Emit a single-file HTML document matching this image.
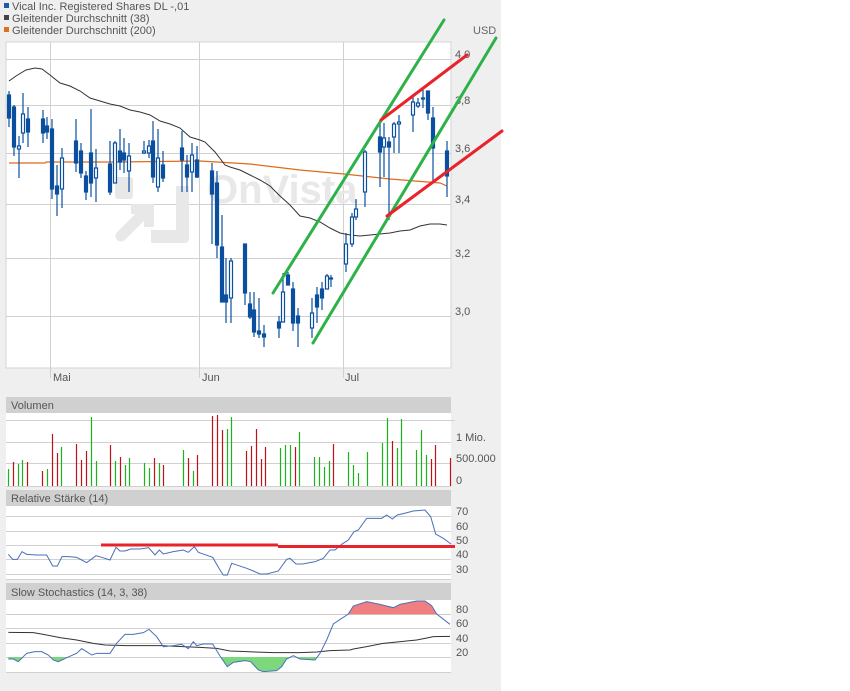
<!DOCTYPE html>
<html><head><meta charset="utf-8"><style>
html,body{margin:0;padding:0;background:#fff;}
body{width:850px;height:691px;position:relative;overflow:hidden;font-family:"Liberation Sans",sans-serif;}
</style></head><body>
<svg width="850" height="691" viewBox="0 0 850 691" xmlns="http://www.w3.org/2000/svg" style="position:absolute;left:0;top:0;font-family:'Liberation Sans',sans-serif">
<rect x="0" y="0" width="501" height="691" fill="#efefef"/>
<rect x="4" y="3" width="5" height="5" fill="#1f5aa6"/>
<rect x="4" y="15" width="5" height="5" fill="#444"/>
<rect x="4" y="27" width="5" height="5" fill="#e07020"/>
<g font-size="11" fill="#555">
<text x="12" y="10">Vical Inc. Registered Shares DL -,01</text>
<text x="12" y="22">Gleitender Durchschnitt (38)</text>
<text x="12" y="34">Gleitender Durchschnitt (200)</text>
<text x="473" y="34" fill="#666">USD</text>
</g>
<rect x="6" y="42" width="445" height="326" fill="#fff" stroke="#d4d4d4"/>
<g stroke="#d0d0d0" stroke-width="1">
<line x1="6" x2="451" y1="59.5" y2="59.5"/><line x1="6" x2="451" y1="105.5" y2="105.5"/>
<line x1="6" x2="451" y1="153.5" y2="153.5"/><line x1="6" x2="451" y1="204.5" y2="204.5"/>
<line x1="6" x2="451" y1="258.5" y2="258.5"/><line x1="6" x2="451" y1="316.5" y2="316.5"/>
<line x1="50.5" x2="50.5" y1="42" y2="378"/><line x1="199.5" x2="199.5" y1="42" y2="378"/><line x1="343.5" x2="343.5" y1="42" y2="378"/>
</g>
<g fill="#e8e8e8">
<rect x="115" y="177" width="18" height="22" rx="3"/>
<path d="M176 186 h13 v52 q0 5 -5 5 h-33 v-13 h25 z"/>
<line x1="121" y1="236" x2="145" y2="212" stroke="#e8e8e8" stroke-width="11" stroke-linecap="round"/>
<path d="M131 204 h23 v23 l-10 0 v-13 h-13z"/>
<text x="207" y="203" font-size="40" font-weight="bold">OnVista</text>
</g>
<g font-size="11" fill="#555">
<text x="455" y="58">4,0</text><text x="455" y="104">3,8</text><text x="455" y="152">3,6</text>
<text x="455" y="203">3,4</text><text x="455" y="257">3,2</text><text x="455" y="315">3,0</text>
<text x="53" y="381">Mai</text><text x="202" y="381">Jun</text><text x="345" y="381">Jul</text>
</g>
<polyline fill="none" stroke="#e06a1a" stroke-width="1.2" points="9,163 45,163 46,162 120,162 200,161 250,164 300,170 344,174 390,179 440,183 447,186"/>
<polyline fill="none" stroke="#333" stroke-width="1" points="9,81 16,76 26,70 35,68 42,69 50,75 60,83 70,86 80,91 90,98 100,101 110,104 120,106 130,110 140,112 150,115 160,121 170,124 180,128 190,137 200,140 205,142 215,152 225,165 230,167 240,170 250,175 260,180 270,186 280,196 290,205 300,216 310,218 320,222 330,228 340,233 350,235 360,236 370,235 380,234 390,233 400,231 410,230 420,226 430,224 440,224 447,225"/>
<g stroke="#0b4f9e" stroke-width="1.2" fill="#0b4f9e">
<line x1="9" x2="9" y1="91" y2="127"/><rect x="7.5" y="95" width="3" height="23"/>
<line x1="14" x2="14" y1="105" y2="156"/><rect x="12.5" y="107" width="3" height="40"/>
<line x1="19" x2="19" y1="136" y2="178"/><rect x="17.5" y="146" width="3" height="3" fill="#fff"/>
<line x1="23" x2="23" y1="93" y2="143"/><rect x="21.5" y="114" width="3" height="19" fill="#fff"/>
<line x1="28" x2="28" y1="107" y2="147"/><rect x="26.5" y="119" width="3" height="13"/>
<line x1="43" x2="43" y1="110" y2="143"/><rect x="41.5" y="119" width="3" height="14"/>
<line x1="47" x2="47" y1="117" y2="139"/><rect x="45.5" y="126" width="3" height="6"/>
<line x1="52" x2="52" y1="119" y2="199"/><rect x="50.5" y="129" width="3" height="60"/>
<line x1="57" x2="57" y1="165" y2="216"/><rect x="55.5" y="186" width="3" height="8"/>
<line x1="62" x2="62" y1="148" y2="208"/><rect x="60.5" y="158" width="3" height="31" fill="#fff"/>
<line x1="76" x2="76" y1="119" y2="172"/><rect x="74.5" y="141" width="3" height="22"/>
<line x1="81" x2="81" y1="143" y2="178"/><rect x="79.5" y="151" width="3" height="22"/>
<line x1="86" x2="86" y1="171" y2="200"/><rect x="84.5" y="176" width="3" height="16"/>
<line x1="91" x2="91" y1="109" y2="197"/><rect x="89.5" y="153" width="3" height="30"/>
<line x1="96" x2="96" y1="149" y2="202"/><rect x="94.5" y="168" width="3" height="10" fill="#fff"/>
<line x1="110" x2="110" y1="141" y2="195"/><rect x="108.5" y="164" width="3" height="28"/>
<line x1="115" x2="115" y1="141" y2="183"/><rect x="113.5" y="143" width="3" height="40" fill="#fff"/>
<line x1="120" x2="120" y1="129" y2="170"/><rect x="118.5" y="151" width="3" height="11"/>
<line x1="124" x2="124" y1="138" y2="173"/><rect x="122.5" y="153" width="3" height="7"/>
<line x1="129" x2="129" y1="143" y2="192"/><rect x="127.5" y="156" width="3" height="15" fill="#fff"/>
<line x1="144" x2="144" y1="141" y2="154"/><rect x="142.5" y="151" width="3" height="2" fill="#fff"/>
<line x1="149" x2="149" y1="140" y2="158"/><rect x="147.5" y="146" width="3" height="7" fill="#fff"/>
<line x1="153" x2="153" y1="121" y2="183"/><rect x="151.5" y="141" width="3" height="36"/>
<line x1="158" x2="158" y1="129" y2="192"/><rect x="156.5" y="158" width="3" height="29" fill="#fff"/>
<line x1="163" x2="163" y1="151" y2="182"/><rect x="161.5" y="165" width="3" height="13"/>
<line x1="182" x2="182" y1="131" y2="192"/><rect x="180.5" y="148" width="3" height="12"/>
<line x1="187" x2="187" y1="155" y2="192"/><rect x="185.5" y="165" width="3" height="12"/>
<line x1="192" x2="192" y1="143" y2="192"/><rect x="190.5" y="155" width="3" height="17" fill="#fff"/>
<line x1="197" x2="197" y1="146" y2="178"/><rect x="195.5" y="160" width="3" height="17"/>
<line x1="212" x2="212" y1="163" y2="244"/><rect x="210.5" y="171" width="3" height="23"/>
<line x1="217" x2="217" y1="171" y2="258"/><rect x="215.5" y="183" width="3" height="62"/>
<line x1="222" x2="222" y1="215" y2="302"/><rect x="220.5" y="247" width="3" height="55"/>
<line x1="226" x2="226" y1="258" y2="323"/><rect x="224.5" y="295" width="3" height="7"/>
<line x1="231" x2="231" y1="258" y2="323"/><rect x="229.5" y="261" width="3" height="37" fill="#fff"/>
<line x1="245" x2="245" y1="244" y2="305"/><rect x="243.5" y="244" width="3" height="49"/>
<line x1="250" x2="250" y1="292" y2="319"/><rect x="248.5" y="304" width="3" height="13"/>
<line x1="254" x2="254" y1="292" y2="337"/><rect x="252.5" y="310" width="3" height="22"/>
<line x1="259" x2="259" y1="298" y2="338"/><rect x="257.5" y="331" width="3" height="3"/>
<line x1="264" x2="264" y1="325" y2="347"/><rect x="262.5" y="334" width="3" height="3"/>
<line x1="279" x2="279" y1="316" y2="338"/><rect x="277.5" y="322" width="3" height="6"/>
<line x1="283" x2="283" y1="273" y2="322"/><rect x="281.5" y="292" width="3" height="30" fill="#fff"/>
<line x1="288" x2="288" y1="272" y2="285"/><rect x="286.5" y="275" width="3" height="10"/>
<line x1="293" x2="293" y1="282" y2="331"/><rect x="291.5" y="289" width="3" height="34"/>
<line x1="298" x2="298" y1="308" y2="347"/><rect x="296.5" y="316" width="3" height="7"/>
<line x1="312" x2="312" y1="298" y2="338"/><rect x="310.5" y="313" width="3" height="15" fill="#fff"/>
<line x1="317" x2="317" y1="287" y2="323"/><rect x="315.5" y="295" width="3" height="12"/>
<line x1="322" x2="322" y1="282" y2="310"/><rect x="320.5" y="289" width="3" height="9"/>
<line x1="327" x2="327" y1="274" y2="289"/><rect x="325.5" y="276" width="3" height="13" fill="#fff"/>
<line x1="331" x2="331" y1="275" y2="287"/><rect x="329.5" y="278" width="3" height="1"/>
<line x1="346" x2="346" y1="233" y2="272"/><rect x="344.5" y="244" width="3" height="20" fill="#fff"/>
<line x1="352" x2="352" y1="213" y2="247"/><rect x="350.5" y="217" width="3" height="27" fill="#fff"/>
<line x1="356" x2="356" y1="199" y2="220"/><rect x="354.5" y="209" width="3" height="8" fill="#fff"/>
<line x1="365" x2="365" y1="150" y2="207"/><rect x="363.5" y="152" width="3" height="40" fill="#fff"/>
<line x1="380" x2="380" y1="120" y2="187"/><rect x="378.5" y="137" width="3" height="15"/>
<line x1="384" x2="384" y1="123" y2="177"/><rect x="382.5" y="138" width="3" height="9" fill="#fff"/>
<line x1="389" x2="389" y1="137" y2="220"/><rect x="387.5" y="142" width="3" height="5"/>
<line x1="394" x2="394" y1="122" y2="153"/><rect x="392.5" y="124" width="3" height="13" fill="#fff"/>
<line x1="399" x2="399" y1="115" y2="153"/><rect x="397.5" y="122" width="3" height="2" fill="#fff"/>
<line x1="413" x2="413" y1="94" y2="132"/><rect x="411.5" y="102" width="3" height="13" fill="#fff"/>
<line x1="418" x2="418" y1="98" y2="108"/><rect x="416.5" y="103" width="3" height="3" fill="#fff"/>
<line x1="423" x2="423" y1="90" y2="108"/><rect x="421.5" y="98" width="3" height="1"/>
<line x1="428" x2="428" y1="91" y2="120"/><rect x="426.5" y="91" width="3" height="22"/>
<line x1="433" x2="433" y1="107" y2="182"/><rect x="431.5" y="118" width="3" height="30"/>
<line x1="447" x2="447" y1="141" y2="197"/><rect x="445.5" y="151" width="3" height="25"/>
</g>
<g stroke-width="3" stroke-linecap="round">
<line x1="273" y1="293" x2="444" y2="20" stroke="#2db24a"/>
<line x1="313" y1="343" x2="496" y2="38" stroke="#2db24a"/>
<line x1="381" y1="120" x2="467" y2="55" stroke="#e8232a"/>
<line x1="387" y1="216" x2="502" y2="131" stroke="#e8232a"/>
</g>
<rect x="6" y="397" width="445" height="16" fill="#d0d0d0"/>
<rect x="6" y="413" width="445" height="73" fill="#fff"/>
<g stroke="#d0d0d0"><line x1="6" x2="455" y1="420.5" y2="420.5"/><line x1="6" x2="451" y1="442.5" y2="442.5"/><line x1="6" x2="451" y1="463.5" y2="463.5"/><line x1="6" x2="451" y1="486.5" y2="486.5"/></g>
<g font-size="11" fill="#555"><text x="11" y="409">Volumen</text><text x="456" y="441">1 Mio.</text><text x="456" y="462">500.000</text><text x="456" y="484">0</text></g>
<g stroke-width="1.2">
<g stroke="#1db31d"><path d="M8.5 469V486M18.5 464V486M22.5 460V486M47.5 469V486M61.5 447V486M91.5 417V486M96.5 461V486M115.5 461V486M125.5 465V486M129.5 458V486M144.5 463V486M149.5 468V486M159.5 463V486M183.5 450V486M193.5 471V486M227.5 429V486M231.5 417V486M280.5 448V486M285.5 445V486M290.5 445V486M299.5 432V486M314.5 457V486M319.5 457V486M324.5 467V486M329.5 461V486M348.5 452V486M353.5 465V486M358.5 473V486M367.5 452V486M382.5 443V486M387.5 418V486M397.5 448V486M401.5 419V486M416.5 450V486M421.5 430V486M426.5 455V486"/></g>
<g stroke="#c0101a"><path d="M13.5 462V486M27.5 462V486M42.5 471V486M52.5 434V486M57.5 453V486M76.5 444V486M81.5 460V486M86.5 451V486M110.5 445V486M120.5 457V486M154.5 458V486M163.5 465V486M188.5 458V486M197.5 455V486M212.5 416V486M217.5 415V486M222.5 430V486M246.5 451V486M251.5 446V486M256.5 429V486M261.5 459V486M265.5 447V486M295.5 447V486M333.5 444V486M392.5 441V486M431.5 459V486M435.5 445V486M450.5 458V486"/></g>
</g>
<rect x="6" y="490" width="445" height="16" fill="#d0d0d0"/>
<rect x="6" y="506" width="445" height="73" fill="#fff"/>
<g stroke="#d0d0d0"><line x1="6" x2="451" y1="516.5" y2="516.5"/><line x1="6" x2="451" y1="531.5" y2="531.5"/><line x1="6" x2="451" y1="545.5" y2="545.5"/><line x1="6" x2="451" y1="559.5" y2="559.5"/><line x1="6" x2="451" y1="574.5" y2="574.5"/><line x1="6" x2="451" y1="579.5" y2="579.5"/></g>
<g font-size="11" fill="#555"><text x="11" y="502">Relative Stärke (14)</text><text x="456" y="515">70</text><text x="456" y="530">60</text><text x="456" y="544">50</text><text x="456" y="558">40</text><text x="456" y="573">30</text></g>
<g transform="translate(0,360) scale(0.33333)"><polyline fill="none" stroke="#4a6fb8" stroke-width="3" points="25,583 38,598 52,598 66,575 80,583 110,585 140,585 158,618 172,618 186,590 206,590 230,592 245,600 260,608 288,587 305,592 330,600 348,562 360,573 375,573 392,567 420,567 446,563 465,585 478,570 490,582 520,575 550,570 565,577 583,560 595,577 612,583 638,592 660,630 670,645 682,645 695,610 740,625 760,633 780,642 800,642 835,633 860,598 870,595 888,612 908,612 945,605 970,595 990,570 1005,570 1025,553 1045,540 1062,515 1075,510 1100,475 1145,475 1160,465 1177,477 1192,465 1213,460 1240,453 1275,450 1292,470 1307,522 1330,535 1353,552"/></g>
<g stroke="#e8232a" stroke-width="3"><line x1="101" x2="278" y1="545" y2="545"/><line x1="278" x2="455" y1="546.5" y2="546.5"/></g>
<rect x="6" y="583" width="445" height="17" fill="#d0d0d0"/>
<rect x="6" y="600" width="445" height="72" fill="#fff"/>
<g stroke="#d0d0d0"><line x1="6" x2="451" y1="614.5" y2="614.5"/><line x1="6" x2="451" y1="628.5" y2="628.5"/><line x1="6" x2="451" y1="643.5" y2="643.5"/><line x1="6" x2="451" y1="657.5" y2="657.5"/><line x1="6" x2="451" y1="672.5" y2="672.5"/></g>
<g font-size="11" fill="#555"><text x="11" y="596">Slow Stochastics (14, 3, 38)</text><text x="456" y="613">80</text><text x="456" y="627">60</text><text x="456" y="642">40</text><text x="456" y="656">20</text></g>
<defs>
<clipPath id="top"><rect x="0" y="0" width="1500" height="763"/></clipPath>
<clipPath id="bot"><rect x="0" y="891" width="1500" height="200"/></clipPath>
</defs>
<g transform="translate(0,360) scale(0.33333)">
<polygon clip-path="url(#top)" fill="#f08080" points="25,897 40,897 55,905 80,880 105,875 125,875 145,885 160,900 175,905 200,893 230,880 245,866 260,875 275,885 290,880 330,880 350,850 375,823 400,823 430,818 447,808 470,830 490,860 520,857 545,853 565,866 580,845 590,857 610,852 638,852 660,888 682,920 700,907 735,902 752,905 775,930 790,935 830,932 845,920 860,897 880,887 900,897 945,900 960,880 980,840 1000,792 1045,762 1060,738 1100,725 1140,733 1180,743 1200,733 1250,723 1275,723 1295,737 1310,762 1350,793 1350,763 25,763"/>
<polygon clip-path="url(#bot)" fill="#7dd87d" points="25,897 40,897 55,905 80,880 105,875 125,875 145,885 160,900 175,905 200,893 230,880 245,866 260,875 275,885 290,880 330,880 350,850 375,823 400,823 430,818 447,808 470,830 490,860 520,857 545,853 565,866 580,845 590,857 610,852 638,852 660,888 682,920 700,907 735,902 752,905 775,930 790,935 830,932 845,920 860,897 880,887 900,897 945,900 960,880 980,840 1000,792 1045,762 1060,738 1100,725 1140,733 1180,743 1200,733 1250,723 1275,723 1295,737 1310,762 1350,793 1350,891 25,891"/>
<polyline fill="none" stroke="#333" stroke-width="3" points="25,817 100,818 130,823 180,833 230,840 280,850 315,855 380,857 480,857 600,862 650,865 690,873 740,875 820,878 900,878 950,876 990,872 1050,870 1060,867 1100,860 1150,850 1180,847 1220,843 1250,840 1275,835 1300,830 1350,829"/>
<polyline fill="none" stroke="#4a6fb8" stroke-width="3" points="25,897 40,897 55,905 80,880 105,875 125,875 145,885 160,900 175,905 200,893 230,880 245,866 260,875 275,885 290,880 330,880 350,850 375,823 400,823 430,818 447,808 470,830 490,860 520,857 545,853 565,866 580,845 590,857 610,852 638,852 660,888 682,920 700,907 735,902 752,905 775,930 790,935 830,932 845,920 860,897 880,887 900,897 945,900 960,880 980,840 1000,792 1045,762 1060,738 1100,725 1140,733 1180,743 1200,733 1250,723 1275,723 1295,737 1310,762 1350,793"/>
</g>
</svg>
</body></html>
